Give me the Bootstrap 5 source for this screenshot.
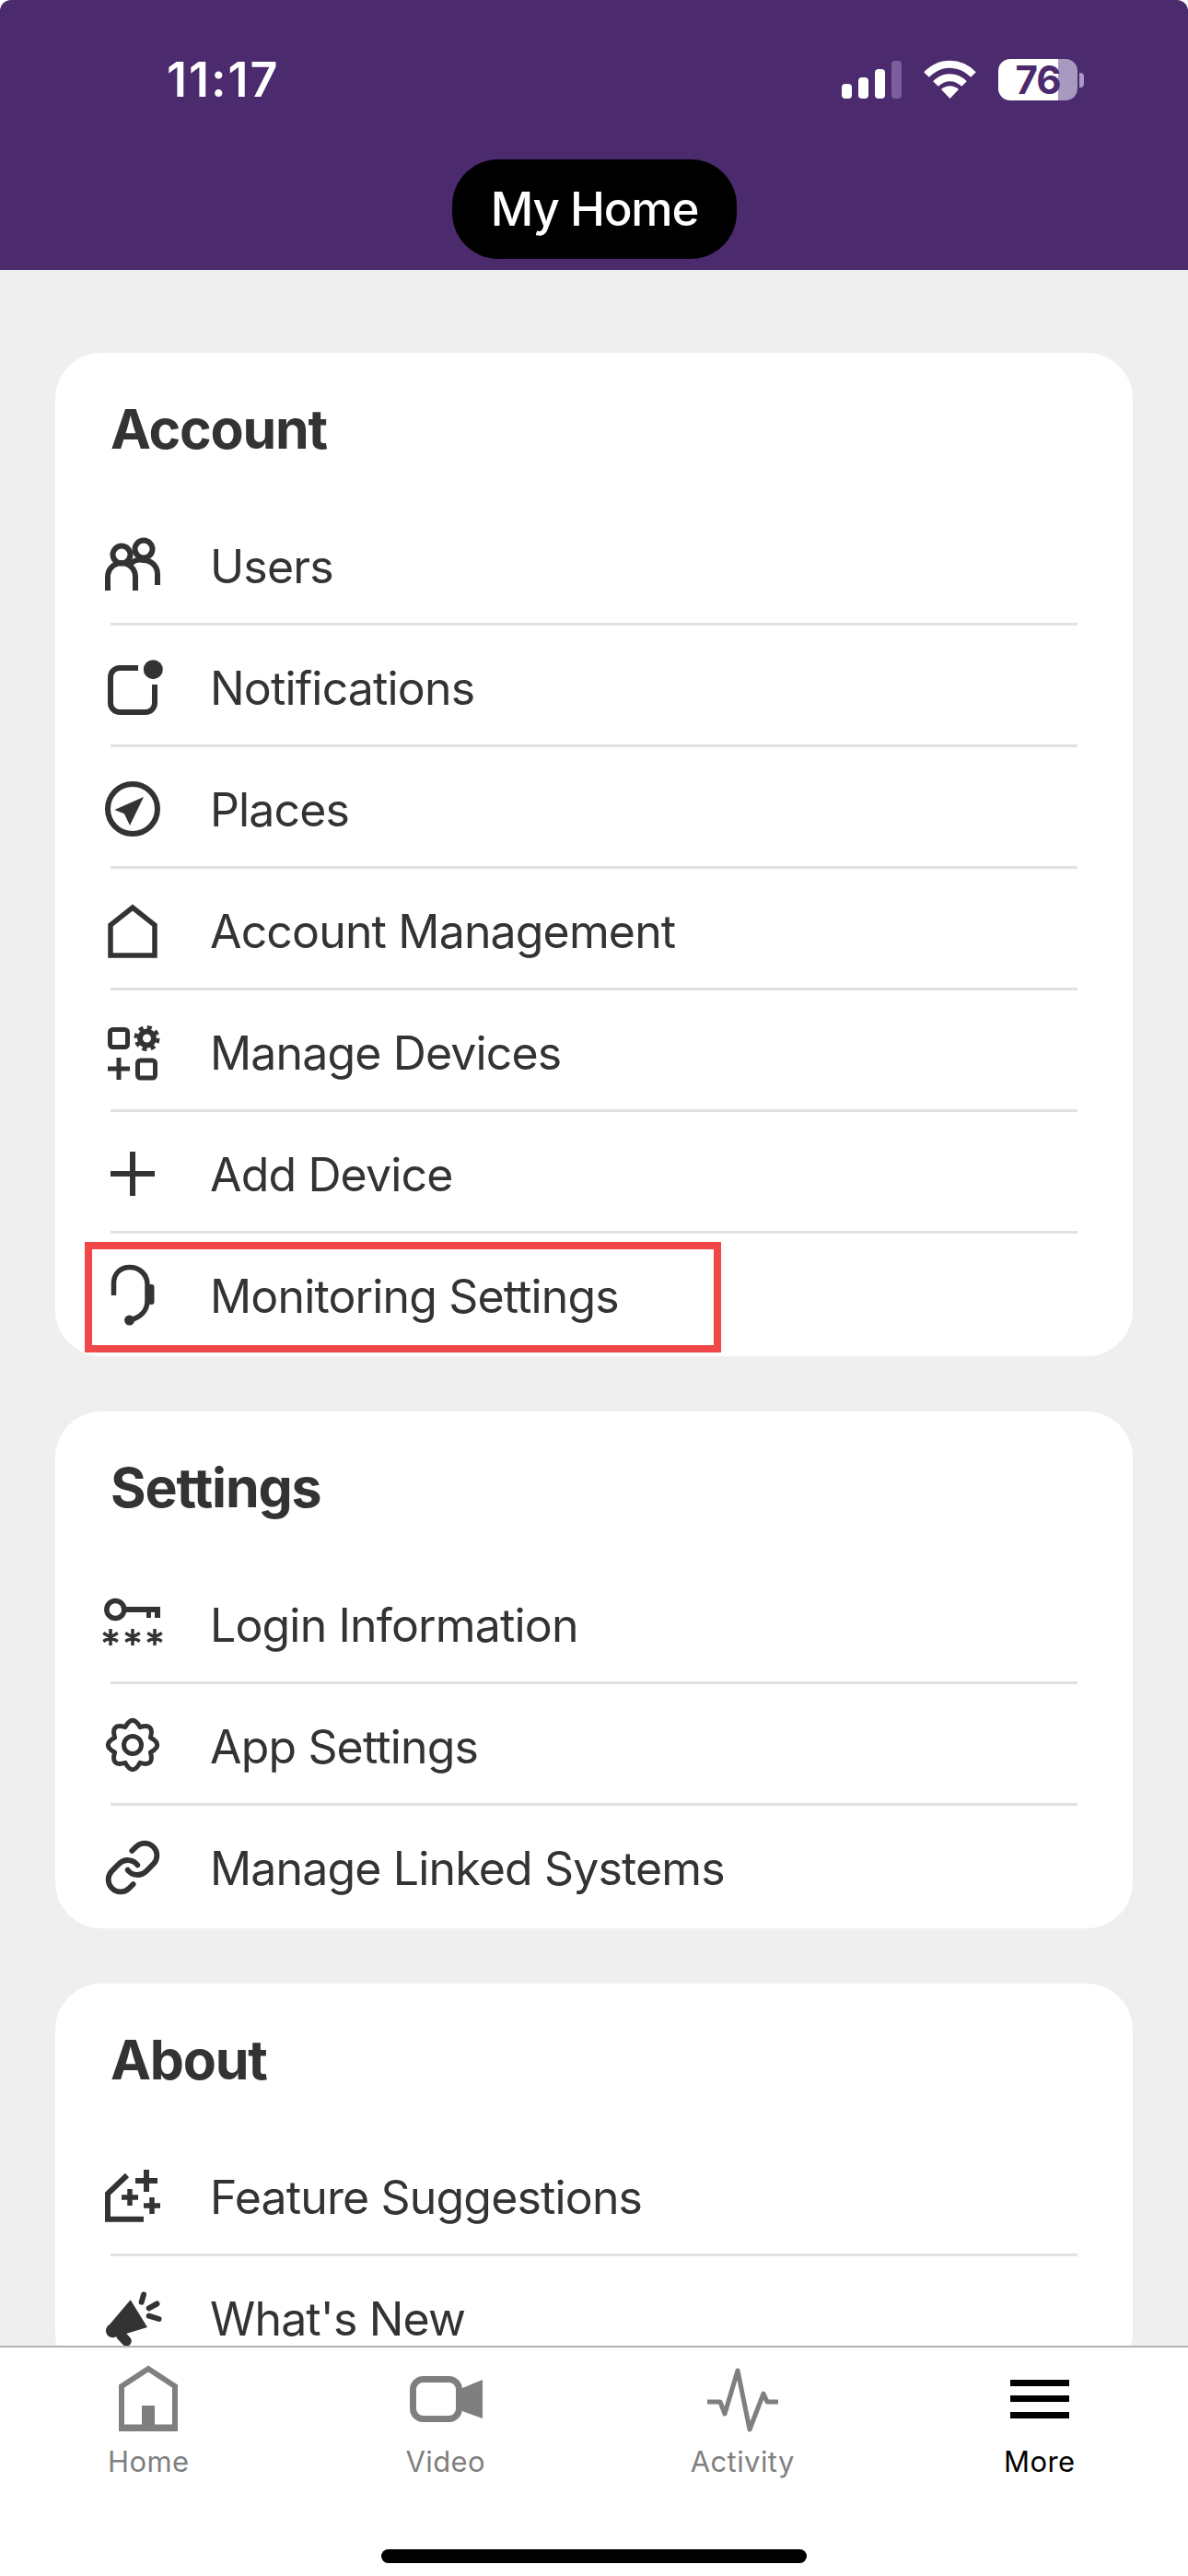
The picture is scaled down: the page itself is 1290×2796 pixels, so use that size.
<!DOCTYPE html>
<html lang="en">
<head>
<meta charset="UTF-8">
<meta name="viewport" content="width=device-width, initial-scale=1.0">
<title>More</title>
<link href="https://cdn.jsdelivr.net/npm/bootstrap@5.3.3/dist/css/bootstrap.min.css" rel="stylesheet">
<style>
    body { width: 1290px; height: 2796px; background: #fff; font-family: Inter, "Liberation Sans", sans-serif; color: #333; overflow: hidden; }
    .app-top { background: #4b2a6d; color: #fff; padding: 64px 113px 12px 181px; border-radius: 12px 12px 0 0; flex: none; }
    .status-row { height: 45px; }
    .clock { font-size: 52px; font-weight: 600; line-height: 49px; letter-spacing: 2px; }
    .batt { width: 86px; height: 45px; border-radius: 13px; background: linear-gradient(90deg, #fff 76%, #a899c0 76%); color: #4b2a6d; font-size: 42px; font-weight: 700; line-height: 45px; text-align: center; letter-spacing: -1px; }
    .batt-nub { width: 5px; height: 16px; margin-left: 2px; border-radius: 0 4px 4px 0; background: #a899c0; }
    .home-pill { width: 309px; height: 108px; margin: 64px 0 0 310px; border-radius: 50px; background: #000; font-size: 51px; font-weight: 500; letter-spacing: -1.2px; }
    .app-body { background: #efefef; padding-top: 90px; }
    .menu-card { margin: 0 60px 60px; border: 0; border-radius: 50px; background: #fff; padding: 0 60px; }
    .menu-title { height: 164px; padding-top: 2px; font-size: 59px; font-weight: 700; color: #333; letter-spacing: -1.2px; }
    .menu-list { --bs-list-group-border-width: 3px; --bs-list-group-border-color: #e2e2e2; }
    .menu-row { height: 132px; padding: 7px 0 0; background: transparent; color: #333; font-size: 50px; letter-spacing: -.85px; }
    .menu-row:last-child { height: 133px; padding-top: 4px; }
    .row-icon { width: 70px; height: 70px; margin: -7px 48px 0 -10px; flex: none; }
    .menu-row:last-child .row-icon { margin-top: -6px; }
    .mark-box { position: absolute; left: -28px; top: 9px; width: 691px; height: 120px; border: 8px solid #f04848; }
    .tabs { flex: none; height: 250px; background: #fff; border-top: 2px solid #b2b2b2; padding-top: 14px; }
    .tab-icon { width: 80px; height: 80px; }
    .tab-label { font-size: 31px; font-weight: 400; letter-spacing: .4px; line-height: 40px; margin-top: 10px; color: #7f7f7f; }
    .tab-on { color: #000; }
    .home-bar { width: 462px; height: 15px; margin: 75px auto 0; border-radius: 8px; background: #000; }
</style>
</head>
<body class="d-flex flex-column">

<header class="app-top">
    <div class="status-row d-flex justify-content-between align-items-center">
        <div class="clock">11:17</div>
        <div class="d-flex align-items-center">
            <svg width="65" height="45" viewBox="0 0 65 45" fill="#fff" class="me-4">
                <rect x="0" y="27" width="11" height="16" rx="4"/>
                <rect x="18" y="20" width="11" height="23" rx="4"/>
                <rect x="36" y="11" width="11" height="32" rx="4"/>
                <rect x="54" y="2" width="11" height="41" rx="4" fill="#7a5f9c"/>
            </svg>
            <svg width="57" height="45" viewBox="0 0 57 45" fill="none" stroke="#fff" stroke-width="8" class="me-4">
                <path d="M3 17C18 2 39 2 54 17"/>
                <path d="M13 27C22 18 35 18 44 27"/>
                <path d="M19 33L28.5 43L38 33C32 28 25 28 19 33Z" fill="#fff" stroke="none"/>
            </svg>
            <div class="batt">76</div>
            <div class="batt-nub"></div>
        </div>
    </div>
    <div class="home-pill d-flex align-items-center justify-content-center">My Home</div>
</header>

<main class="app-body flex-grow-1 overflow-hidden">
    <section class="card menu-card">
        <div class="menu-title d-flex align-items-center">Account</div>
        <ul class="list-group list-group-flush menu-list">
            <li class="list-group-item menu-row d-flex align-items-center">
                <svg class="row-icon" viewBox="0 0 70 70" fill="none" stroke="#333" stroke-width="6">
                    <circle cx="22" cy="25" r="9.5"/><circle cx="46" cy="19" r="9.5"/>
                    <path d="M7 64V49a15 15 0 0 1 30 0V64"/>
                    <path d="M31 36a15 15 0 0 1 15-5a15 15 0 0 1 15 15V58"/>
                </svg>
                Users
            </li>
            <li class="list-group-item menu-row d-flex align-items-center">
                <svg class="row-icon" viewBox="0 0 70 70" fill="none" stroke="#333" stroke-width="6">
                    <path d="M40 16H20a10 10 0 0 0-10 10V54a10 10 0 0 0 10 10H48a10 10 0 0 0 10-10V34"/>
                    <circle cx="56.3" cy="17.7" r="10.5" fill="#333" stroke="none"/>
                </svg>
                Notifications
            </li>
            <li class="list-group-item menu-row d-flex align-items-center">
                <svg class="row-icon" viewBox="0 0 70 70" fill="none" stroke="#333" stroke-width="6">
                    <circle cx="34" cy="37" r="27"/>
                    <path d="M46 24L14.3 38L25 42.3L31 55Z" fill="#333" stroke="none"/>
                </svg>
                Places
            </li>
            <li class="list-group-item menu-row d-flex align-items-center">
                <svg class="row-icon" viewBox="0 0 70 70" fill="none" stroke="#333" stroke-width="5.5">
                    <path d="M10 64H58V31L34 12L10 31Z"/>
                </svg>
                Account Management
            </li>
            <li class="list-group-item menu-row d-flex align-items-center">
                <svg class="row-icon" viewBox="0 0 70 70" fill="none" stroke="#333" stroke-width="5">
                    <rect x="9.5" y="12.5" width="19" height="19" rx="3"/>
                    <circle cx="49.5" cy="22" r="7.5" stroke-width="6"/>
                    <circle cx="49.5" cy="22" r="12" stroke-width="4" stroke-dasharray="5 4.42"/>
                    <path d="M7 55H31M19 43V67"/>
                    <rect x="39.5" y="46" width="19" height="19" rx="3"/>
                </svg>
                Manage Devices
            </li>
            <li class="list-group-item menu-row d-flex align-items-center">
                <svg class="row-icon" viewBox="0 0 70 70" fill="none" stroke="#333" stroke-width="6">
                    <path d="M10 37H58M34 13V61"/>
                </svg>
                Add Device
            </li>
            <li class="list-group-item menu-row d-flex align-items-center position-relative">
                <svg class="row-icon" viewBox="0 0 70 70" fill="none" stroke="#333" stroke-width="5.5">
                    <path d="M13.5 36V23C13.5 12 21 5.5 31 5.5S50 13 50 24V42C50 53 42 60 31 63"/>
                    <rect x="51" y="24" width="6.5" height="22" rx="3" fill="#333" stroke="none"/>
                    <circle cx="30.6" cy="63" r="5.5" fill="#333" stroke="none"/>
                </svg>
                Monitoring Settings
                <div class="mark-box"></div>
            </li>
        </ul>
    </section>

    <section class="card menu-card">
        <div class="menu-title d-flex align-items-center">Settings</div>
        <ul class="list-group list-group-flush menu-list">
            <li class="list-group-item menu-row d-flex align-items-center">
                <svg class="row-icon" viewBox="0 0 70 70" fill="none" stroke="#333" stroke-width="5.5">
                    <circle cx="15.3" cy="21" r="9.5"/>
                    <path d="M26 21H64" stroke-width="6"/>
                    <path d="M49 21H54V30H49ZM58 21H64V30H58Z" fill="#333" stroke="none"/>
                    <path stroke-width="3.5" d="M10 42V60M2.2 46.5L17.8 55.5M2.2 55.5L17.8 46.5M34 42V60M26.2 46.5L41.8 55.5M26.2 55.5L41.8 46.5M58 42V60M50.2 46.5L65.8 55.5M50.2 55.5L65.8 46.5"/>
                </svg>
                Login Information
            </li>
            <li class="list-group-item menu-row d-flex align-items-center">
                <svg class="row-icon" viewBox="0 0 70 70" fill="none" stroke="#333" stroke-width="5">
                    <g transform="translate(34 36)" stroke-linejoin="round">
                        <path d="M19.4-8Q34 0 19.4 8Q24 24 8 19.4Q0 34-8 19.4Q-24 24-19.4 8Q-34 0-19.4-8Q-24-24-8-19.4Q0-34 8-19.4Q24-24 19.4-8Z"/>
                        <circle r="9.5"/>
                    </g>
                </svg>
                App Settings
            </li>
            <li class="list-group-item menu-row d-flex align-items-center">
                <svg class="row-icon" viewBox="0 0 70 70" fill="none" stroke="#333" stroke-width="2.2" stroke-linecap="round">
                    <g transform="translate(2.2 4.2) scale(2.65)">
                        <path d="M10 13a5 5 0 0 0 7.54.54l3-3a5 5 0 0 0-7.07-7.07l-1.72 1.71"/>
                        <path d="M14 11a5 5 0 0 0-7.54-.54l-3 3a5 5 0 0 0 7.07 7.07l1.71-1.71"/>
                    </g>
                </svg>
                Manage Linked Systems
            </li>
        </ul>
    </section>

    <section class="card menu-card">
        <div class="menu-title d-flex align-items-center">About</div>
        <ul class="list-group list-group-flush menu-list">
            <li class="list-group-item menu-row d-flex align-items-center">
                <svg class="row-icon" viewBox="0 0 70 70" fill="none" stroke="#333" stroke-width="5.5">
                    <path d="M28 14L7 34V61.7H46" stroke-width="6"/>
                    <path d="M49 8V32M37 20H61" stroke-width="6"/>
                    <path d="M31 29V47M22 38H40M55 38V56M46 47H64"/>
                </svg>
                Feature Suggestions
            </li>
            <li class="list-group-item menu-row d-flex align-items-center">
                <svg class="row-icon" viewBox="0 0 70 70" fill="#333" stroke="none">
                    <path d="M31.7 16.3L50 46L14 57a7.5 7.5 0 0 1-5-14Z"/>
                    <g fill="none" stroke="#333" stroke-linecap="round">
                        <path d="M21.7 55L27.3 61" stroke-width="11"/>
                        <path d="M46 10.5L43.7 18.7M60.5 20.5L51.7 25.3M51.7 33.7L62.5 37" stroke-width="6"/>
                    </g>
                </svg>
                What's New
            </li>
        </ul>
    </section>
</main>

<footer class="tabs">
    <div class="row g-0 text-center">
        <div class="col-3">
            <svg class="tab-icon" viewBox="0 0 80 80" fill="none" stroke="#7f7f7f" stroke-width="6">
                <path d="M11 74V28L40 9L69 28V74Z"/>
                <path d="M8 73H72M40 49V74" stroke-width="7"/>
                <rect x="33" y="49" width="14" height="25" fill="#7f7f7f" stroke="none"/>
            </svg>
            <div class="tab-label">Home</div>
        </div>
        <div class="col-3">
            <svg class="tab-icon" viewBox="0 0 80 80" fill="none" stroke="#7f7f7f" stroke-width="7">
                <rect x="4.5" y="20.5" width="50" height="43" rx="11"/>
                <path d="M58 30L80 21V63L58 55Z" fill="#7f7f7f" stroke="none"/>
            </svg>
            <div class="tab-label">Video</div>
        </div>
        <div class="col-3">
            <svg class="tab-icon" viewBox="0 0 80 80" fill="none" stroke="#7f7f7f" stroke-width="5" stroke-linejoin="round">
                <path d="M2 45H16L21 58L35 11L48 75L63 36L67 45H79"/>
            </svg>
            <div class="tab-label">Activity</div>
        </div>
        <div class="col-3">
            <svg class="tab-icon" viewBox="0 0 80 80" fill="#000">
                <rect x="8" y="21" width="64" height="7"/>
                <rect x="8" y="38" width="64" height="7"/>
                <rect x="8" y="56" width="64" height="7"/>
            </svg>
            <div class="tab-label tab-on">More</div>
        </div>
    </div>
    <div class="home-bar"></div>
</footer>

<script src="https://cdn.jsdelivr.net/npm/bootstrap@5.3.3/dist/js/bootstrap.bundle.min.js"></script>
</body>
</html>
